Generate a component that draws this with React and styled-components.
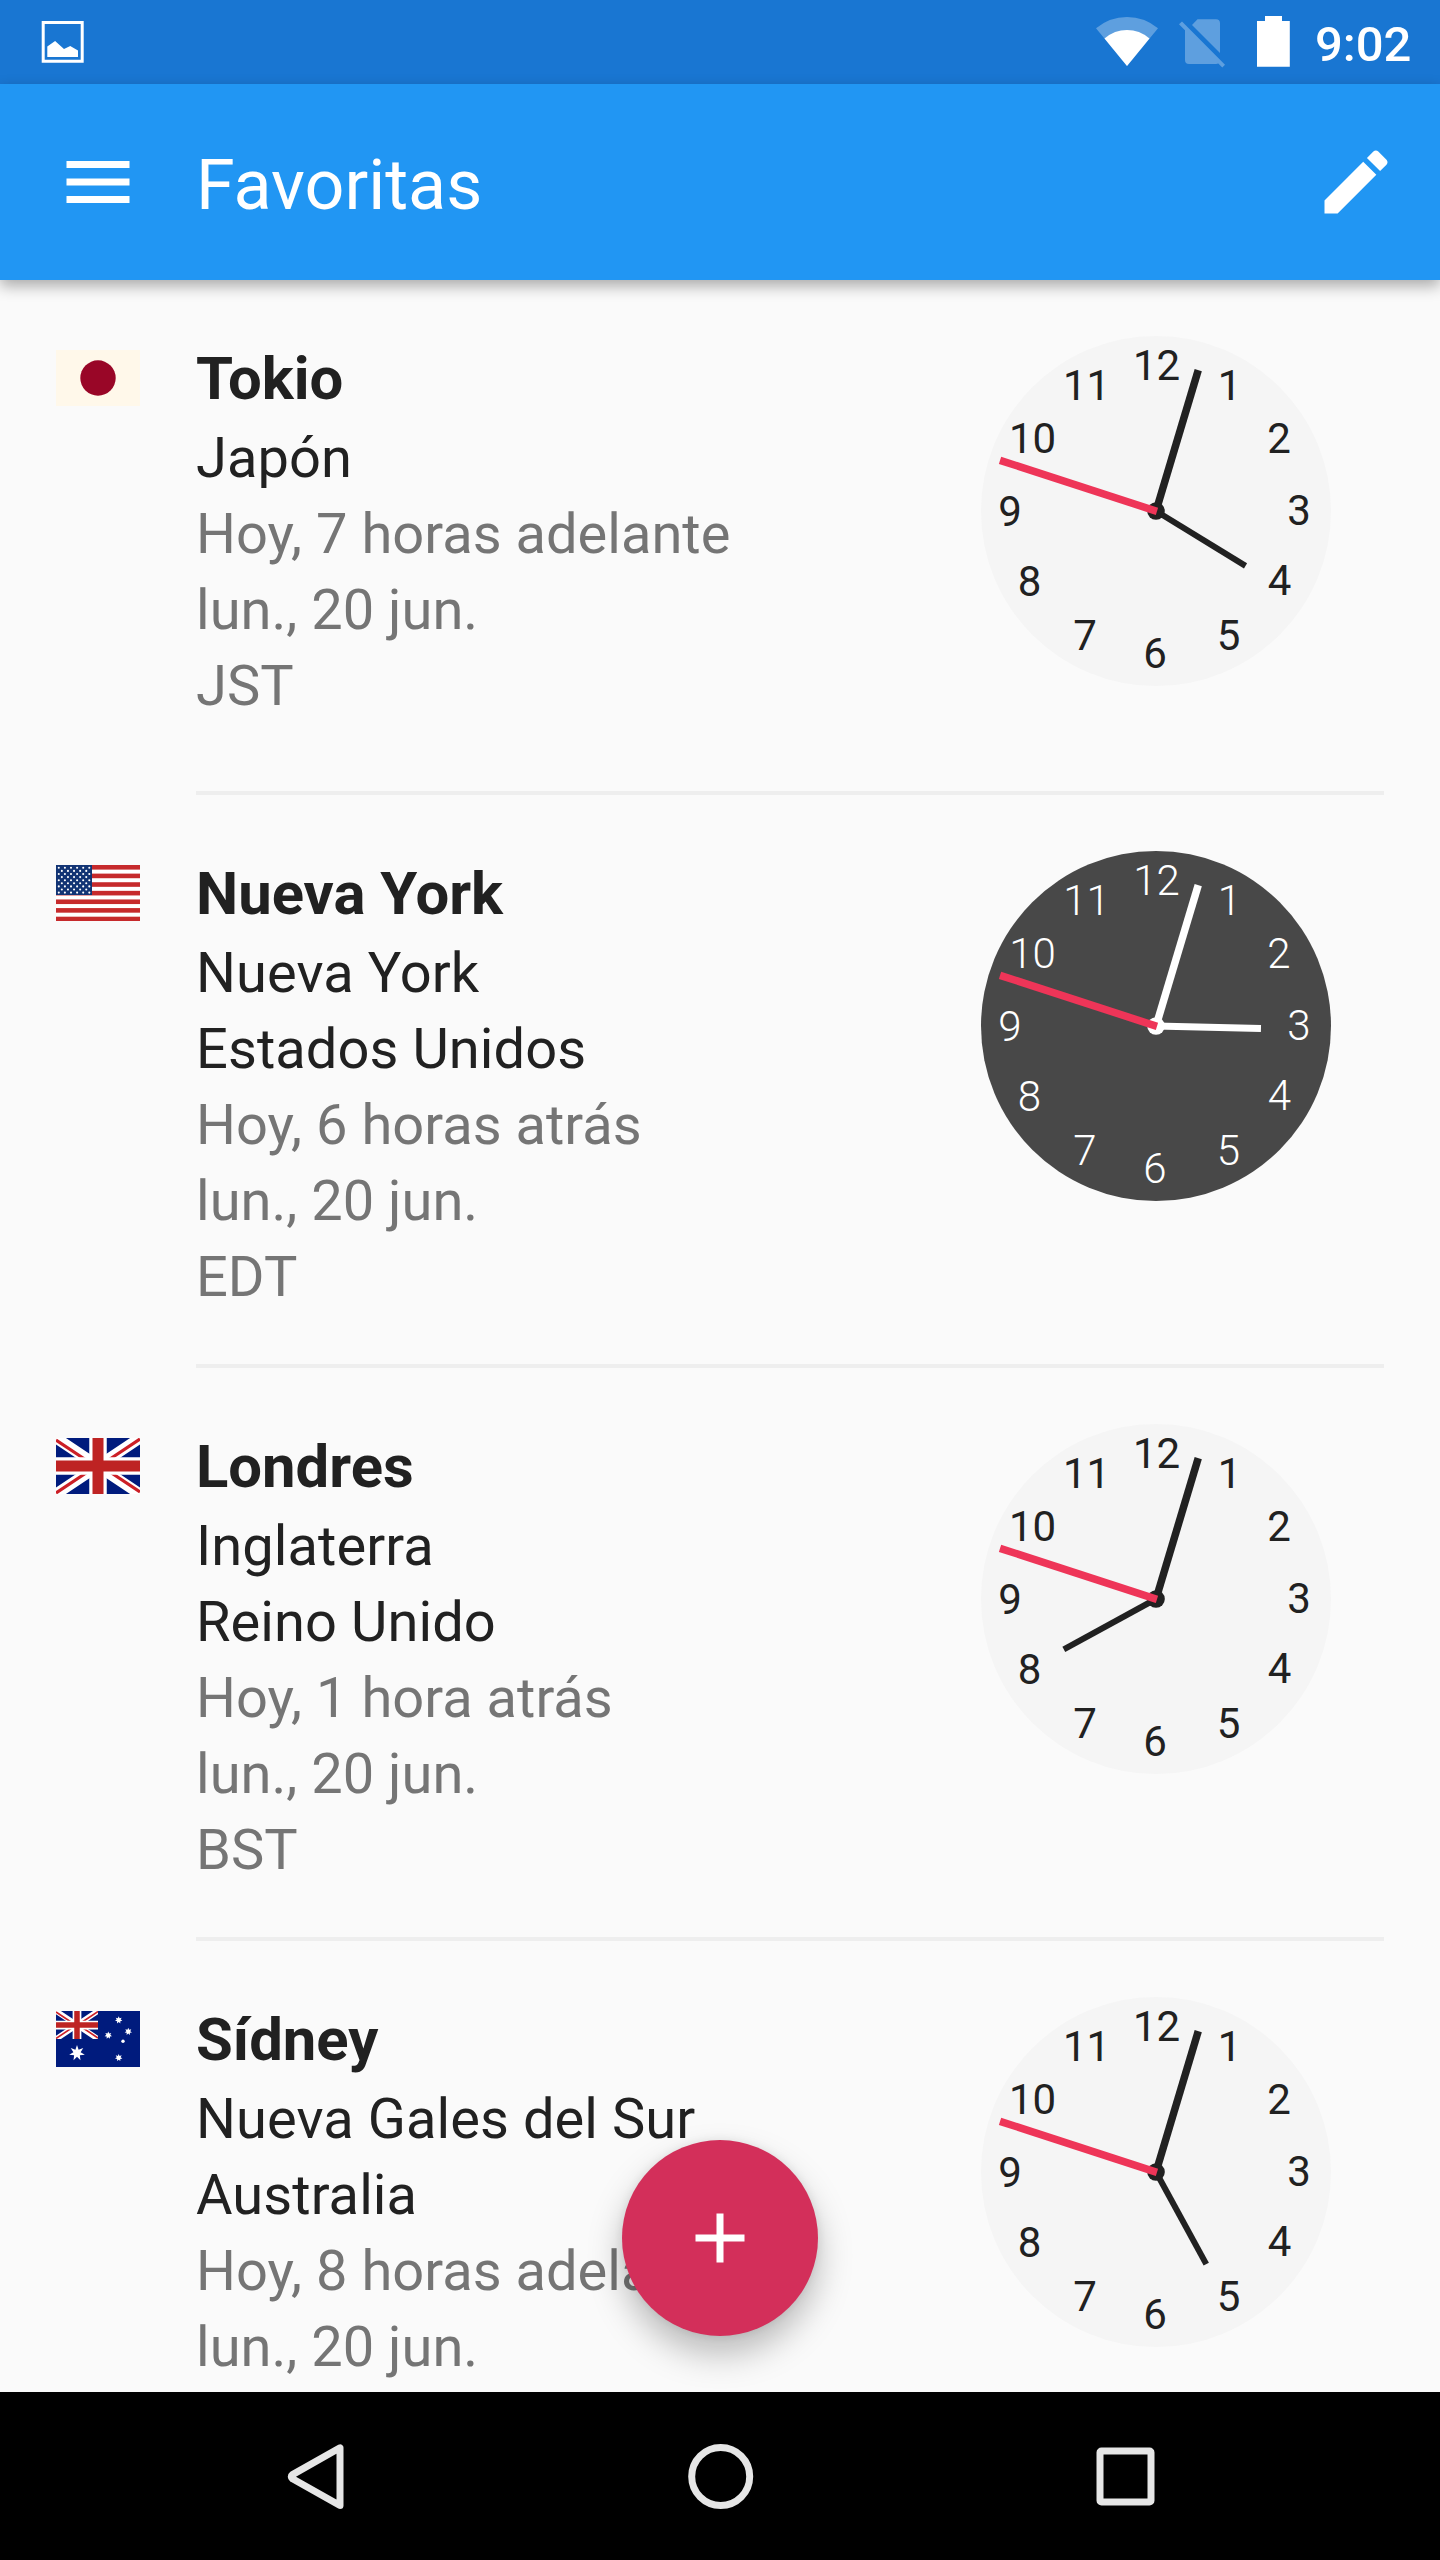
import React, { Fragment } from 'react';
import styled, { createGlobalStyle } from 'styled-components';


const GlobalStyle = createGlobalStyle`
    * {
        box-sizing: border-box;
    }
    body {
        margin: 0;
        background: #fafafa;
        font-family: Roboto, "Liberation Sans", sans-serif;
    }
`
const Screen = styled.div`
    position: relative;
    display: flex;
    flex-direction: column;
    width: 1440px;
    height: 2560px;
    overflow: hidden;
    background: #fafafa;
`
const StatusBar = styled.div`
    display: flex;
    align-items: center;
    justify-content: space-between;
    flex: none;
    height: 84px;
    padding: 0 28px 0 38px;
    background: #1976d2;
`
const StatusIcons = styled.div`
    display: flex;
    align-items: center;
`
const StatusTime = styled.span`
    width: 97px;
    margin-left: 22px;
    padding-top: 5px;
    color: #fff;
    font-size: 49px;
    font-weight: 500;
    line-height: 58px;
    white-space: nowrap;
`
const Toolbar = styled.header`
    display: flex;
    align-items: center;
    flex: none;
    z-index: 1;
    height: 196px;
    padding: 0 42px 0 56px;
    background: #2196f3;
    box-shadow: 0 6px 14px rgba(0, 0, 0, 0.32);
`
const Title = styled.h1`
    flex: 1;
    margin: 0 0 0 56px;
    padding-top: 6px;
    color: #fff;
    font-size: 70px;
    font-weight: 400;
    line-height: 82px;
`
const IconButton = styled.button`
    display: flex;
    width: 84px;
    height: 84px;
    padding: 0;
    border: 0;
    background: none;
    color: #fff;
`
const List = styled.ul`
    flex: 1;
    min-height: 0;
    margin: 0;
    padding: 0 56px;
    overflow: hidden;
    list-style: none;
`
const Row = styled.li`
    display: flex;
    min-height: 515px;
`
const FlagBox = styled.div`
    flex: none;
    width: 140px;
    padding-top: 70px;

    svg {
        display: block;
    }
`
const RowBody = styled.div`
    display: flex;
    justify-content: space-between;
    flex: 1;
    padding: 56px 53px 49px 0;
    border-bottom: 4px solid #eeeeee;
`
const City = styled.h2`
    margin: 0;
    padding-top: 3px;
    color: #212121;
    font-size: 59.8px;
    font-weight: 700;
    line-height: 81px;
`
const Line = styled.div`
    color: ${props => props.$muted ? '#757575' : '#212121'};
    font-size: 56px;
    letter-spacing: ${props => props.$muted ? '0.02px' : '0.08px'};
    line-height: 76px;
    white-space: nowrap;
`
const Face = styled.svg`
    display: block;
    flex: none;
    overflow: visible;
    font-size: 42px;
    font-weight: ${props => props.$night ? 300 : 400};
`
const Fab = styled.button`
    position: absolute;
    left: 622px;
    top: 2140px;
    z-index: 2;
    display: flex;
    align-items: center;
    justify-content: center;
    width: 196px;
    height: 196px;
    padding: 0;
    border: 0;
    border-radius: 50%;
    background: #d32f5a;
    color: #fff;
    box-shadow: 0 18px 34px rgba(0, 0, 0, 0.26), 0 0 10px rgba(0, 0, 0, 0.08);
`
const NavBar = styled.nav`
    position: relative;
    z-index: 3;
    display: flex;
    align-items: center;
    justify-content: center;
    gap: 321px;
    flex: none;
    height: 168px;
    background: #000;
`


/* baseline position of every numeral, measured from the centre of the face */
const numerals = [
    ['12', 0.5, -131],
    ['1', 73.5, -111],
    ['2', 123, -58.5],
    ['3', 143, 14],
    ['4', 123.5, 83.5],
    ['5', 72.5, 138.5],
    ['6', -1, 157],
    ['7', -71, 138.5],
    ['8', -126.5, 85],
    ['9', -146, 15],
    ['10', -123.5, -58.5],
    ['11', -69.5, -111],
]

const cities = [
    {
        id: 'tokio',
        name: 'Tokio',
        flag: 'jp',
        places: ['Japón'],
        info: ['Hoy, 7 horas adelante', 'lun., 20 jun.', 'JST'],
        hour: 121.5,
        hand: 6,
    },
    {
        id: 'ny',
        name: 'Nueva York',
        flag: 'us',
        places: ['Nueva York', 'Estados Unidos'],
        info: ['Hoy, 6 horas atrás', 'lun., 20 jun.', 'EDT'],
        hour: 91.4,
        hand: 7,
        night: true,
    },
    {
        id: 'londres',
        name: 'Londres',
        flag: 'gb',
        places: ['Inglaterra', 'Reino Unido'],
        info: ['Hoy, 1 hora atrás', 'lun., 20 jun.', 'BST'],
        hour: 241.4,
        hand: 6,
    },
    {
        id: 'sidney',
        name: 'Sídney',
        flag: 'au',
        places: ['Nueva Gales del Sur', 'Australia'],
        info: ['Hoy, 8 horas adelante', 'lun., 20 jun.'],
        hour: 151.4,
        hand: 6,
    },
]


const Clock = ({ hour, hand, night }) => {
    const ink = night ? '#ffffff' : '#212121';
    return (
        <Face width="350" height="350" viewBox="-175 -175 350 350" $night={night}>
            <circle r="175" fill={night ? '#484848' : '#f5f5f5'} />
            { numerals.map(([label, x, y]) => (
                <text key={label} x={x} y={y} textAnchor="middle" fill={ink}>{label}</text>
            ))}
            <circle r="8.8" fill={ink} />
            <line y2="-105" stroke={ink} strokeWidth={hand} transform={`rotate(${hour})`} />
            <line y2="-147" stroke={ink} strokeWidth="7.5" transform="rotate(16.7)" />
            <line y1="1" y2="-164" stroke="#ee3558" strokeWidth="7.5" transform="rotate(288)" />
        </Face>
    )
}

const UnionJack = () => (
    <Fragment>
        <path d="M0 0h84v56H0z" fill="#001b7d" />
        <path d="M0 0L84 56M84 0L0 56" stroke="#fff" strokeWidth="11" />
        <path d="M0 2L36 26M48 30L84 54" stroke="#cc1f26" strokeWidth="3.2" />
        <path d="M84 1L48 25M36 31L0 55" stroke="#cc1f26" strokeWidth="3.2" />
        <path d="M42 0v56M0 28h84" stroke="#fff" strokeWidth="17.5" />
        <path d="M42 0v56M0 28h84" stroke="#be2323" strokeWidth="11" />
    </Fragment>
)

const starPoints = (cx, cy, r, inner) => (
    Array.from({ length: 14 }, (_, i) => {
        const radius = i % 2 ? inner : r;
        const a = Math.PI * i / 7;
        return `${(cx + radius * Math.sin(a)).toFixed(2)},${(cy - radius * Math.cos(a)).toFixed(2)}`;
    }).join(' ')
)

const usStars = [];
for (let row = 0; row < 9; row++) {
    for (let col = 0; col < (row % 2 ? 5 : 6); col++) {
        usStars.push([2.8 + col * 6.1 + (row % 2 ? 3.05 : 0), 2.8 + row * 3.1]);
    }
}

const Flag = ({ code }) => (
    <svg width="84" height="56" viewBox="0 0 84 56">
        { code === 'jp' && (
            <Fragment>
                <path d="M0 0h84v56H0z" fill="#fff8ea" />
                <circle cx="42" cy="28" r="17.7" fill="#990627" />
            </Fragment>
        )}
        { code === 'us' && (
            <Fragment>
                <path d="M0 0h84v56H0z" fill="#fff" />
                { [0, 1, 2, 3, 4, 5, 6].map((i) => (
                    <rect key={i} y={i * 8.615} width="84" height="4.6" fill="#c62a2c" />
                ))}
                <path d="M0 0h36v30H0z" fill="#123474" />
                { usStars.map(([x, y]) => (
                    <circle key={`${x}-${y}`} cx={x} cy={y} r="1.05" fill="#fff" />
                ))}
            </Fragment>
        )}
        { code === 'gb' && <UnionJack /> }
        { code === 'au' && (
            <Fragment>
                <path d="M0 0h84v56H0z" fill="#001b7d" />
                <svg width="42" height="28" viewBox="0 0 84 56"><UnionJack /></svg>
                <polygon points={starPoints(21, 42, 8, 3.7)} fill="#fff" />
                <polygon points={starPoints(62.7, 9, 3.8, 2)} fill="#fff" />
                <polygon points={starPoints(72.3, 20.6, 3.8, 2)} fill="#fff" />
                <polygon points={starPoints(52.3, 24.3, 3.8, 2)} fill="#fff" />
                <polygon points={starPoints(62.7, 46.7, 3.8, 2)} fill="#fff" />
                <circle cx="67" cy="30.3" r="1.7" fill="#fff" />
            </Fragment>
        )}
    </svg>
)

const CityRow = ({ city }) => (
    <Row>
        <FlagBox>
            <Flag code={city.flag} />
        </FlagBox>
        <RowBody>
            <div>
                <City>{city.name}</City>
                { city.places.map((text) => <Line key={text}>{text}</Line>) }
                { city.info.map((text) => <Line key={text} $muted>{text}</Line>) }
            </div>
            <Clock hour={city.hour} hand={city.hand} night={city.night} />
        </RowBody>
    </Row>
)

const App = () => {
    return (
        <Fragment>
            <GlobalStyle />
            <Screen>
                <StatusBar>
                    <svg width="50" height="84" viewBox="38 0 50 84">
                        <path d="M43.2 22.5h39v38.8h-39z" fill="none" stroke="#fff" strokeWidth="3" />
                        <path d="M47.3 57V46.5L55.1 41L64 49L70.2 46L78 50.5V57z" fill="#fff" />
                    </svg>
                    <StatusIcons>
                        {/* wifi, missing sim and battery share one strip */}
                        <svg width="200" height="84" viewBox="1093 0 200 84">
                            <path d="M1127 66L1096 28.3Q1109.5 17 1127 17T1158 28.3z" fill="#fff" fillOpacity="0.3" />
                            <path d="M1127 66L1104.5 38.4Q1114.5 30 1127 30T1149.5 38.4z" fill="#fff" />
                            <path d="M1192 25L1197.5 19.3H1216a4 4 0 0 1 4 4V53zM1179 24.3L1182 21.6L1225 64.7L1222.3 67.4L1218.3 63.6L1216 64H1189a4 4 0 0 1-4-4V30.3z" fill="#fff" fillOpacity="0.3" />
                            <path d="M1265 16h17v5h7.8v45.7H1257V21h8z" fill="#fff" />
                        </svg>
                        <StatusTime>9:02</StatusTime>
                    </StatusIcons>
                </StatusBar>
                <Toolbar>
                    <IconButton aria-label="Menú">
                        <svg width="84" height="84" viewBox="0 0 24 24" fill="currentColor">
                            <path d="M3 18h18v-2H3v2zm0-5h18v-2H3v2zm0-7v2h18V6H3z" />
                        </svg>
                    </IconButton>
                    <Title>Favoritas</Title>
                    <IconButton aria-label="Editar">
                        <svg width="84" height="84" viewBox="0 0 24 24" fill="currentColor">
                            <path d="M3 17.25V21h3.75L17.81 9.94l-3.75-3.75L3 17.25zM20.71 7.04c.39-.39.39-1.02 0-1.41l-2.34-2.34c-.39-.39-1.02-.39-1.41 0l-1.83 1.83 3.75 3.75 1.83-1.83z" />
                        </svg>
                    </IconButton>
                </Toolbar>
                <List>
                    { cities.map((city) => <CityRow key={city.id} city={city} />) }
                </List>
                <Fab aria-label="Añadir">
                    <svg width="84" height="84" viewBox="0 0 24 24" fill="currentColor">
                        <path d="M19 13h-6v6h-2v-6H5v-2h6V5h2v6h6v2z" />
                    </svg>
                </Fab>
                <NavBar>
                    <svg width="84" height="84" viewBox="0 0 84 84" fill="none" stroke="#e6e6e6" strokeWidth="7" strokeLinejoin="round">
                        <path d="M67 13.8V71.5L19.5 44.8Q17 42.6 19.5 40.6z" />
                    </svg>
                    <svg width="84" height="84" viewBox="0 0 84 84" fill="none" stroke="#e6e6e6" strokeWidth="7">
                        <circle cx="42.7" cy="42.5" r="29" />
                    </svg>
                    <svg width="84" height="84" viewBox="0 0 84 84" fill="none" stroke="#e6e6e6" strokeWidth="7">
                        <rect x="17" y="17" width="51" height="51" rx="1.5" />
                    </svg>
                </NavBar>
            </Screen>
        </Fragment>
    )
}

export default App
